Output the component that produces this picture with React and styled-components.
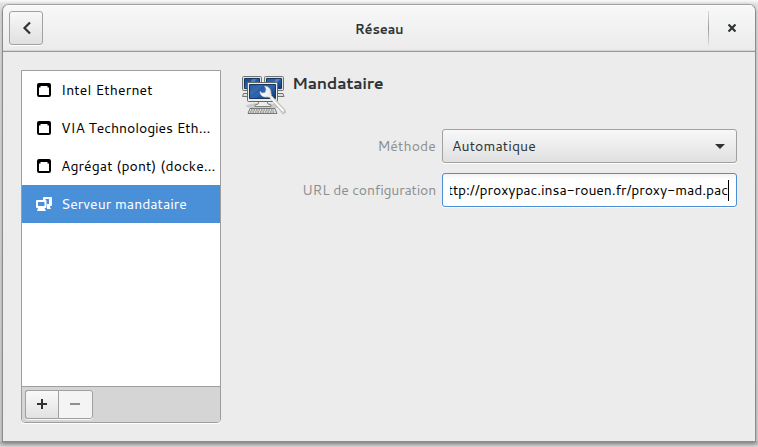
import React from 'react';
import styled, { createGlobalStyle } from 'styled-components';

const GlobalStyle = createGlobalStyle`
  * { box-sizing: border-box; }
  html, body { margin: 0; height: 100%; overflow: hidden; }
  body { background: #d9d9d9; font: 14px/20px Cantarell, "Noto Sans", sans-serif; color: #2e3436; }
  svg { display: block; flex: none; }
  button { font: inherit; color: inherit; }
`;

const Desktop = styled.div`
  height: 447px;
  padding: 4px 2px 5px;
  background: linear-gradient(#fafafa, #e2e2e2 4px, #d4d4d4 441px, #b4b4b4 442px, #dadada);
`;

const Window = styled.main`
  height: 438px;
  width: 754px;
  display: flex;
  flex-direction: column;
  border: 1px solid #8b8d8d;
  border-top-color: #a0a0a0;
  border-radius: 7px 7px 0 0;
  background: #ececec;
  overflow: hidden;
  box-shadow: 0 2px 4px rgba(0, 0, 0, 0.3);
`;

const HeaderBar = styled.header`
  height: 47px;
  flex: none;
  display: grid;
  grid-template-columns: 47px 1fr 47px;
  align-items: center;
  padding: 0 0 1px;
  border-bottom: 1px solid #989a99;
  background: linear-gradient(#f8f8f8, #ebebeb);
  box-shadow: inset 0 1px #fff, inset 0 -1px #d4d4d4;
`;

const Text = styled.span`
  display: block;
  white-space: nowrap;
  letter-spacing: ${(p) => p.$track || 0}px;
`;

const Title = styled(Text)`
  padding-top: 2px;
  text-align: center;
  font-size: 13px;
  font-weight: 700;
`;

const BackButton = styled.button`
  width: 34px;
  height: 34px;
  margin-left: 6px;
  padding: 0;
  display: grid;
  place-items: center;
  border: 1px solid #a1a1a1;
  border-radius: 3px;
  background: linear-gradient(#f8f8f8, #e0e0e0);
  box-shadow: 0 1px #fff;
`;

const CloseArea = styled.div`
  height: 34px;
  display: grid;
  place-items: center;
  border-left: 1px solid;
  border-image: linear-gradient(#e0e0e0, #999 50%, #e0e0e0) 1;
`;

const CloseButton = styled.button`
  padding: 0;
  border: 0;
  background: none;
`;

const Content = styled.div`
  flex: 1;
  display: grid;
  grid-template-columns: 200px 496px;
  column-gap: 21px;
  padding: 18px 0 0 18px;
`;

const Sidebar = styled.aside`
  height: 353px;
  display: flex;
  flex-direction: column;
  border: 1px solid #9d9f9e;
  border-radius: 0 0 4px 4px;
  background: #fff;
  box-shadow: 0 1px #fff;
`;

const DeviceList = styled.div`
  flex: 1;
`;

const DeviceRow = styled.div`
  height: 38px;
  display: flex;
  align-items: center;
  gap: 9px;
  padding-left: 14px;
  color: ${(p) => (p.$selected ? '#fff' : '#000')};
  background: ${(p) => (p.$selected ? '#4a90d9' : 'transparent')};
`;

const ListToolbar = styled.div`
  height: 36px;
  display: flex;
  padding: 3px;
  border-top: 1px solid #9d9f9e;
  border-radius: 0 0 3px 3px;
  background: #d5d5d5;
`;

const ToolButton = styled.button`
  width: ${(p) => (p.$last ? 35 : 33)}px;
  height: 29px;
  padding: ${(p) => (p.$last ? '0 2px 2px 0' : '0 0 2px')};
  display: grid;
  place-items: center;
  border: 1px solid #a0a0a0;
  border-right-width: ${(p) => (p.$last ? 1 : 0)}px;
  border-radius: ${(p) => (p.$last ? '0 3px 3px 0' : '3px 0 0 3px')};
  background: ${(p) => (p.$last ? '#f4f4f4' : 'linear-gradient(#f9f9f9, #e2e2e2)')};
  color: ${(p) => (p.$last ? '#8e9192' : '#2e3436')};
  box-shadow: 0 1px #f6f6f6;
`;

const Panel = styled.section`
  display: flex;
  flex-direction: column;
`;

const PanelHeader = styled.div`
  height: 59px;
  display: flex;
  align-items: flex-start;
  gap: 5px;
`;

const Heading = styled(Text)`
  padding-top: 3px;
  font-size: 16px;
  font-weight: 700;
`;

const Form = styled.div`
  display: grid;
  grid-template-columns: 194px 295px;
  column-gap: 6px;
  row-gap: 10px;
  align-items: center;
`;

const Label = styled(Text)`
  justify-self: end;
  color: #8d9091;
`;

const Select = styled.div`
  height: 34px;
  display: flex;
  align-items: center;
  justify-content: space-between;
  padding: 0 11px 0 9px;
  border: 1px solid #a1a1a1;
  border-radius: 3px;
  background: linear-gradient(#f8f8f8, #e0e0e0);
  box-shadow: 0 1px #fff;
`;

const Entry = styled.div`
  height: 34px;
  display: flex;
  align-items: center;
  padding: 0 7px;
  border: 1px solid #4a90d9;
  border-radius: 3px;
  color: #000;
  background: linear-gradient(#f3f3f3, #fff 5px);
  box-shadow: 0 1px #fff;
`;

const EntryView = styled.div`
  flex: 1;
  display: flex;
  justify-content: flex-end;
  overflow: hidden;
`;

const Caret = styled.i`
  width: 1px;
  height: 21px;
  background: #000;
`;

const EthernetIcon = () => (
  <svg width="16" height="16" viewBox="0 0 16 16">
    <path
      fill="currentColor"
      fillRule="evenodd"
      d="M3 1h10q2 0 2 2v10q0 2-2 2H3q-2 0-2-2V3q0-2 2-2zM3 5.500V13h10V5.500h-1.500V4h-7v1.500z"
    />
  </svg>
);

const ProxyIcon = () => (
  <svg width="16" height="16" viewBox="0 0 16 16" fill="currentColor" fillRule="evenodd">
    <path d="M8 1h7q1 0 1 1v7q0 1-1 1h-1v1l1 2h-4V8h2V3H9.500v1H7V2q0-1 1-1z" />
    <path d="M1 4h8.500q1 0 1 1v6q0 1-1 1h-1L10 15H1l1-3H1q-1 0-1-1V5q0-1 1-1zM2 6v4h6.500V6z" />
  </svg>
);

const NetworkIcon = () => (
  <svg width="45" height="45" viewBox="0 0 45 45">
    <defs>
      <linearGradient id="screen" x2="1" y2="1">
        <stop stopColor="#184487" />
        <stop offset=".5" stopColor="#2e65b3" />
        <stop offset="1" stopColor="#123773" />
      </linearGradient>
      <linearGradient id="metal">
        <stop stopColor="#fff" />
        <stop offset="1" stopColor="#cfd1cd" />
      </linearGradient>
    </defs>
    <g fill="#dedfda" stroke="#72756f">
      <path d="M1.5 23.500h8v3H.5zM33 23.500h8l1 3h-9z" />
      <rect x=".5" y="6.500" width="19" height="14" rx="1" />
      <rect x="22.500" y="6.500" width="19" height="14" rx="1" />
    </g>
    <path fill="url(#screen)" stroke="#173865" d="M2.500 8.500h15v10h-15zM24.500 8.500h15v10h-15z" />
    <path d="M10 9h5l-5 6H7zM34 9h4l-5 6h-3z" fill="#7da5d4" opacity=".5" />
    <ellipse cx="21" cy="36" rx="17" ry="3" fill="#666" opacity=".25" />
    <path d="M17 31h8l1 3 3 1v1.500H13V35l3-1z" fill="#ecece8" stroke="#80837d" />
    <rect x="5.500" y="12.500" width="30" height="19" rx="1" fill="#eeeeeb" stroke="#666963" />
    <path fill="url(#screen)" stroke="#173865" d="M7.500 14.500h26v14h-26z" />
    <path d="M8 15h14L8 26z" fill="#85aad5" opacity=".2" />
    <path d="M8 38.500h25l2 5H6z" fill="#ddddda" stroke="#777a74" />
    <path d="M9 40h23M8 42h25" stroke="#6a6e68" strokeDasharray="1.500 1" />
    <path
      d="M22.500 16l1.500 3.500-1 3-3 .5-2-2c-.5 4 3 7 7 6l2.500.5L41 44l2.500-1.500-.5-2.500L29.500 25.500l-.5-3c0-4-3-6.500-6.500-6.500z"
      fill="url(#metal)"
      stroke="#a0a29d"
      strokeWidth=".6"
    />
    <path d="m29 28 12.500 13" stroke="#fff" strokeWidth="1.500" />
  </svg>
);

const devices = [
  { name: 'Intel Ethernet', track: 0.15 },
  { name: 'VIA Technologies Eth…', track: -0.08 },
  { name: 'Agrégat (pont) (docke…', track: 0.05 },
  { name: 'Serveur mandataire', track: 0, proxy: true },
];

export default function App() {
  return (
    <>
      <GlobalStyle />
      <Desktop>
        <Window>
          <HeaderBar>
            <BackButton aria-label="Retour">
              <svg width="16" height="16" viewBox="0 0 16 16" fill="none" stroke="currentColor" strokeWidth="2.200">
                <path d="m12 2.500-5.500 5.500 5.500 5.500" />
              </svg>
            </BackButton>
            <Title $track={-0.25}>Réseau</Title>
            <CloseArea>
              <CloseButton aria-label="Fermer">
                <svg width="8" height="8" viewBox="0 0 8 8" stroke="currentColor" strokeWidth="2.200">
                  <path d="m.5.500 7 7M7.500.500l-7 7" />
                </svg>
              </CloseButton>
            </CloseArea>
          </HeaderBar>
          <Content>
            <Sidebar>
              <DeviceList>
                {devices.map((d) => (
                  <DeviceRow key={d.name} $selected={d.proxy}>
                    {d.proxy ? <ProxyIcon /> : <EthernetIcon />}
                    <Text $track={d.track}>{d.name}</Text>
                  </DeviceRow>
                ))}
              </DeviceList>
              <ListToolbar>
                <ToolButton aria-label="Ajouter">
                  <svg width="10" height="10" viewBox="0 0 10 10" fill="currentColor">
                    <path d="M4 0h2v4h4v2H6v4H4V6H0V4h4z" />
                  </svg>
                </ToolButton>
                <ToolButton $last aria-label="Supprimer">
                  <svg width="10" height="10" viewBox="0 0 10 10" fill="currentColor">
                    <path d="M0 4h10v2H0z" />
                  </svg>
                </ToolButton>
              </ListToolbar>
            </Sidebar>
            <Panel>
              <PanelHeader>
                <NetworkIcon />
                <Heading $track={-0.4}>Mandataire</Heading>
              </PanelHeader>
              <Form>
                <Label $track={0.12}>Méthode</Label>
                <Select>
                  <Text $track={0.1}>Automatique</Text>
                  <svg width="10" height="5" viewBox="0 0 10 5" fill="currentColor">
                    <path d="M0 0h10L5 5z" />
                  </svg>
                </Select>
                <Label $track={-0.2}>URL de configuration</Label>
                <Entry>
                  <EntryView>
                    <Text $track={-0.09}>http://proxypac.insa-rouen.fr/proxy-mad.pac</Text>
                  </EntryView>
                  <Caret />
                </Entry>
              </Form>
            </Panel>
          </Content>
        </Window>
      </Desktop>
    </>
  );
}
